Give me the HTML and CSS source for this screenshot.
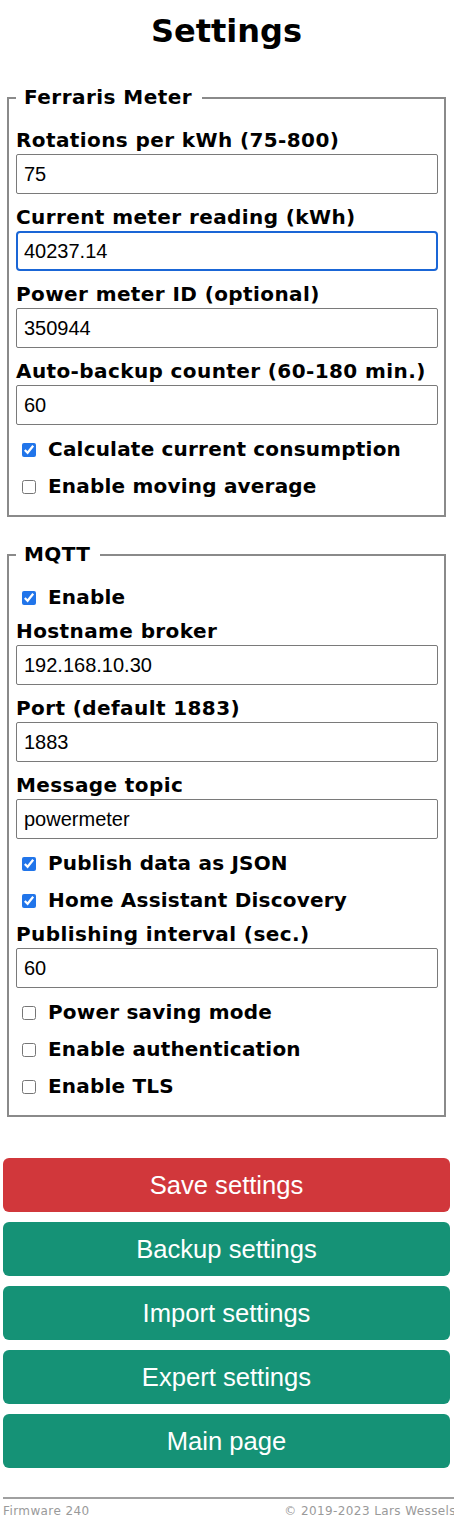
FILE: index.html
```html
<!DOCTYPE html>
<html lang="en">
<head>
<meta charset="utf-8">
<title>Settings</title>
<link rel="stylesheet" href="styles.css">
</head>
<body>
<div class="page">
  <h1 class="title">Settings</h1>
  <form class="form">
    <fieldset class="group">
      <legend class="legend">Ferraris Meter</legend>
      <div class="field">
        <label class="label" for="rot">Rotations per kWh (75-800)</label>
        <input class="input" id="rot" type="text" value="75">
      </div>
      <div class="field">
        <label class="label" for="cur">Current meter reading (kWh)</label>
        <input class="input input-focus" id="cur" type="text" value="40237.14">
      </div>
      <div class="field">
        <label class="label" for="pid">Power meter ID (optional)</label>
        <input class="input" id="pid" type="text" value="350944">
      </div>
      <div class="field">
        <label class="label" for="abc">Auto-backup counter (60-180 min.)</label>
        <input class="input" id="abc" type="text" value="60">
      </div>
      <div class="check">
        <input class="box" id="ccc" type="checkbox" checked>
        <label class="check-label" for="ccc">Calculate current consumption</label>
      </div>
      <div class="check">
        <input class="box" id="ema" type="checkbox">
        <label class="check-label" for="ema">Enable moving average</label>
      </div>
    </fieldset>

    <fieldset class="group group-mqtt">
      <legend class="legend">MQTT</legend>
      <div class="check">
        <input class="box" id="men" type="checkbox" checked>
        <label class="check-label" for="men">Enable</label>
      </div>
      <div class="field">
        <label class="label" for="host">Hostname broker</label>
        <input class="input" id="host" type="text" value="192.168.10.30">
      </div>
      <div class="field">
        <label class="label" for="port">Port (default 1883)</label>
        <input class="input" id="port" type="text" value="1883">
      </div>
      <div class="field">
        <label class="label" for="topic">Message topic</label>
        <input class="input" id="topic" type="text" value="powermeter">
      </div>
      <div class="check">
        <input class="box" id="json" type="checkbox" checked>
        <label class="check-label" for="json">Publish data as JSON</label>
      </div>
      <div class="check">
        <input class="box" id="had" type="checkbox" checked>
        <label class="check-label" for="had">Home Assistant Discovery</label>
      </div>
      <div class="field">
        <label class="label" for="pint">Publishing interval (sec.)</label>
        <input class="input" id="pint" type="text" value="60">
      </div>
      <div class="check">
        <input class="box" id="psm" type="checkbox">
        <label class="check-label" for="psm">Power saving mode</label>
      </div>
      <div class="check">
        <input class="box" id="auth" type="checkbox">
        <label class="check-label" for="auth">Enable authentication</label>
      </div>
      <div class="check">
        <input class="box" id="tls" type="checkbox">
        <label class="check-label" for="tls">Enable TLS</label>
      </div>
    </fieldset>

    <div class="actions">
      <button class="btn btn-red" type="button">Save settings</button>
      <button class="btn btn-green" type="button">Backup settings</button>
      <button class="btn btn-green" type="button">Import settings</button>
      <button class="btn btn-green" type="button">Expert settings</button>
      <button class="btn btn-green" type="button">Main page</button>
    </div>
  </form>
  <div class="footer-wrap">
    <div class="footer">
      <span class="footer-text">Firmware 240</span>
      <span class="footer-text">&copy; 2019-2023 Lars Wessels</span>
    </div>
  </div>
</div>
</body>
</html>
```
FILE: styles.css
```css
html, body {
  margin: 0;
  padding: 0;
  background: #ffffff;
  overflow-x: hidden;
}

body {
  font-family: "DejaVu Sans", Verdana, sans-serif;
  color: #000;
}

.page {
  padding: 0 4px 0 3px;
}

.title {
  margin: 11px 0 0;
  height: 40px;
  line-height: 40px;
  font-size: 32px;
  font-weight: bold;
  text-align: center;
}

.form {
  margin: 0;
}

.group {
  margin: 35px 4px 0;
  padding: 8px 6px 10px 7px;
  border: 2px solid #8a8a8a;
  min-width: 0;
}

.group-mqtt {
  margin-top: 26px;
}

.legend {
  padding: 0 10px 0 8px;
  font-size: 20px;
  letter-spacing: 0.45px;
  font-weight: bold;
  line-height: 23px;
}

.field {
  margin-top: 12px;
}

.label {
  display: block;
  font-size: 20px;
  letter-spacing: 0.4px;
  font-weight: bold;
  line-height: 23px;
  margin-bottom: 2px;
  white-space: nowrap;
}

.input {
  display: block;
  box-sizing: border-box;
  width: 100%;
  height: 40px;
  margin: 0;
  padding: 0 7px;
  border: 1px solid #7a7a7a;
  border-radius: 2px;
  font-family: "Liberation Sans", Arial, sans-serif;
  font-size: 20px;
  color: #000;
  background: #fff;
}

.input-focus {
  border: 2px solid #1a66d6;
  border-radius: 4px;
  padding: 0 6px;
  outline: none;
}

.check {
  display: flex;
  align-items: center;
  height: 37px;
}

.legend + .check {
  margin-top: 5px;
}

.field + .check {
  margin-top: 6px;
}

.check + .field {
  margin-top: 4px;
}

.box {
  width: 14px;
  height: 14px;
  margin: 0 12px 0 6px;
  accent-color: #2175ea;
  flex: none;
}

.check-label {
  font-size: 20px;
  letter-spacing: 0.2px;
  font-weight: bold;
  line-height: 23px;
  white-space: nowrap;
}

.actions {
  display: flex;
  flex-direction: column;
  gap: 10px;
  margin-top: 41px;
}

.btn {
  display: block;
  width: 100%;
  height: 54px;
  margin: 0;
  border: none;
  border-radius: 6px;
  color: #fff;
  font-family: "Liberation Sans", Arial, sans-serif;
  font-size: 25.6px;
  cursor: pointer;
}

.btn-red {
  background: #d1373b;
}

.btn-green {
  background: #159276;
}

.footer-wrap {
  margin-top: 29px;
  margin-right: -30px;
}

.footer {
  display: flex;
  justify-content: space-between;
  border-top: 2px solid #a0a0a0;
  padding: 4px 0 8px;
  width: 453px;
}

.footer-text {
  font-size: 12px;
  letter-spacing: 0.4px;
  color: #9a9a9a;
  line-height: 16px;
}
```
